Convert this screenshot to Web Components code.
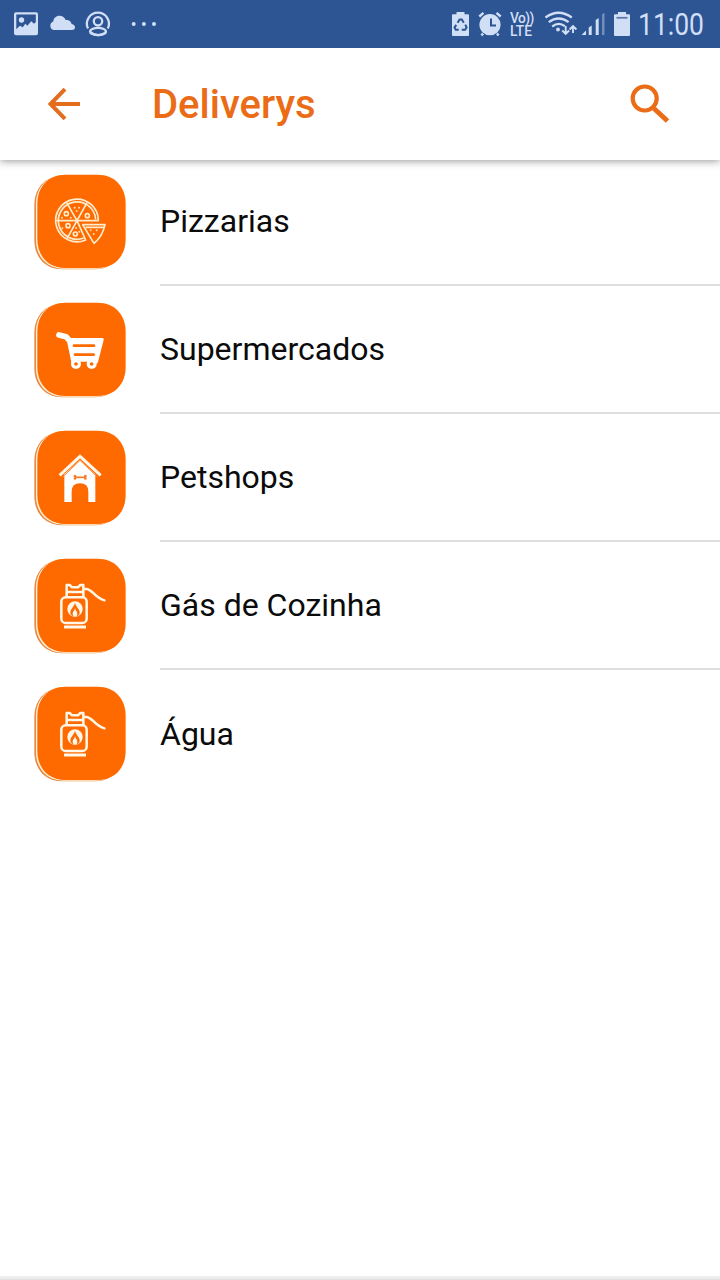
<!DOCTYPE html>
<html lang="pt-BR">
<head>
<meta charset="utf-8">
<title>Deliverys</title>
<style>
html,body{margin:0;padding:0;background:#fff}
body{width:720px;height:1280px;overflow:hidden;font-family:Roboto,"Liberation Sans",sans-serif}
</style>
</head>
<body>
<delivery-app></delivery-app>
<script>
const statusIcons = {
  picture: [12, 28, '<path fill-rule="evenodd" d="M16 12.3h20a2 2 0 0 1 2 2v18.900a2 2 0 0 1-2 2H16a2 2 0 0 1-2-2V14.300a2 2 0 0 1 2-2zM16.300 14.500v14.700l3.500-3.500 3 1.500 2.500-3.500 2 2 4-4.500 2.700 2.500 1.800-1.500v-7.700z"/><circle cx="21.500" cy="20" r="2.700"/>'],
  cloud: [48, 28, '<path d="M53.700 30a4.400 4.400 0 0 1-.5-8.400c.3-3.500 2.900-5.900 6.300-5.900 3 0 5.200 1.700 6.200 4.300 3.300-.5 5.500 1.300 5.900 3.900 4.600.5 4.500 6.100.3 6.100z"/>'],
  person: [85, 28, '<g fill="none" stroke="currentColor" stroke-width="2.300"><path d="M88 28.500a11 11 0 1 1 19.800 0M90.500 32a11 11 0 0 0 15.500 0"/><circle cx="98" cy="21.300" r="4.200"/><ellipse cx="98" cy="31.500" rx="8" ry="3.600"/></g>'],
  more: [130, 32, '<circle cx="133.700" cy="24" r="2"/><circle cx="143.900" cy="24" r="2"/><circle cx="154" cy="24" r="2"/>'],
  recycle: [450, 22, '<path d="M456.500 12h8v2.300h3.500q1 0 1 1V35q0 1-1 1h-15q-1 0-1-1V15.300q0-1 1-1h3.500z"/><g fill="none" stroke="#2d5593" stroke-width="2"><path d="M457.600 22.800l2-3.300h2.200l2 3.200M465.300 24.700l1.300 2.800-1.500 2.300h-3.400M458.700 29.800h-2.900l-1.300-2.200 1.700-2.700"/></g>'],
  alarm: [477, 26, '<circle cx="490" cy="24.700" r="10.600"/><path d="M491 18.500v7h5" fill="none" stroke="#2d5593" stroke-width="2"/><path d="M479.300 16.500l4.200-3.600M500.700 16.500l-4.200-3.600M483 33.500l-1.500 1.900M497 33.500l1.500 1.900" fill="none" stroke="currentColor" stroke-width="2.500"/>'],
  wifi: [543, 35, '<g fill="none" stroke="currentColor" stroke-width="2.300"><path d="M545.500 17.500q13-9.500 26.300 0M548.800 22.200q9.800-7.500 19.800 0M552.200 26.500q6.500-5 12.600-.300"/></g><circle cx="558" cy="29.500" r="1.900"/><g fill="none" stroke="currentColor" stroke-width="1.900"><path d="M565.700 26v7.500M562.300 30.500l3.400 3.500 3.400-3.500M573 33v-6.500M569.600 29.500l3.400-3.500 3.400 3.500"/></g>'],
  signal: [579, 28, '<path d="M581.500 35l4.500-4.500V35zM588.700 27.500l3-2V35h-3zM595.700 20l3-2v17h-3z"/><path opacity=".42" d="M602 14.500l2.500-2V35H602z"/>'],
  battery: [612, 20, '<path d="M618 12h8v2.200h3q1 0 1 1V35q0 1-1 1h-14q-1 0-1-1V15.200q0-1 1-1h3z"/><path d="M616.500 17.800h11" stroke="#5d79ac" stroke-width="1.800"/>']
};
const gas = '<g fill="none" stroke="#fff8e8" stroke-width="7.500" stroke-linejoin="round"><rect x="109" y="139" width="76" height="77" rx="13"/><path d="M125 138V102h9l7 7h18l7-7h9v36M125 123h50"/><path d="M178 114h7c18 2 24 26 53 34" stroke-linecap="round"/><path d="M117 228h66" stroke-linecap="butt" stroke-width="9"/></g><circle cx="150" cy="174" r="23" fill="#fff8e8"/><path d="M150 155c3 13 14 18 14 30 0 8-6 11-14 11s-14-4-14-11c0-12 11-17 14-30z" fill="#ff6a00"/><path d="M150 172c1 7 7 10 7 16s-3 9-7 9-7-3-7-9 6-9 7-16z" fill="#fff8e8"/>';
const glyphs = {
  pizza: '<g fill="none" stroke="#ffeccb" stroke-width="5" stroke-linejoin="round"><path d="M220 167A64 64 0 1 0 182 225L156 167z"/><path d="M212 163A56 56 0 1 0 176 219M156 167H94M156 167l-31-54M156 167l30-54M156 167l-30 54"/><path d="M173 179h67q-7 35-33 56zM182 187h54"/><circle cx="187" cy="152" r="6"/><circle cx="124" cy="146" r="6"/><circle cx="129" cy="182" r="6"/><circle cx="151" cy="207" r="6"/></g><g fill="#ffdfae"><circle cx="149" cy="128" r="3"/><circle cx="162" cy="128" r="3"/><circle cx="155" cy="138" r="3"/><circle cx="111" cy="158" r="3"/><circle cx="137" cy="158" r="3"/><circle cx="112" cy="190" r="3"/><circle cx="153" cy="189" r="3"/><circle cx="163" cy="200" r="3"/><circle cx="197" cy="196" r="3"/><circle cx="215" cy="196" r="3"/><circle cx="206" cy="207" r="3"/></g>',
  cart: '<path d="M102 120l21 5 8 9" fill="none" stroke="#fff" stroke-width="17" stroke-linecap="round" stroke-linejoin="round"/><path d="M124 129h108q5 0 4 6l-17 66q-1 5-6 5h-10l-14-6h-24l-12 6h-13z" fill="#fff"/><circle cx="153" cy="207" r="15" fill="#fff"/><circle cx="200" cy="207" r="15" fill="#fff"/><g fill="#ff6a00"><circle cx="153" cy="207" r="5.500"/><circle cx="200" cy="207" r="5.500"/></g><path d="M147 152h60M150 179h56" stroke="#ff6a00" stroke-width="8" stroke-linecap="round"/>',
  house: '<path d="M104 157l61-57 62 57" fill="none" stroke="#fff8ea" stroke-width="9"/><path d="M165 110l46 44v83h-21v-31q0-25-25-25t-25 25v31h-22v-83z" fill="#fff"/><path d="M113 162l52-50 52 50" fill="none" stroke="#ff8b38" stroke-width="3"/><path d="M151 163h29" stroke="#f47920" stroke-width="5"/><g fill="#f47920"><circle cx="150" cy="159.500" r="4"/><circle cx="150" cy="166.500" r="4"/><circle cx="181" cy="159.500" r="4"/><circle cx="181" cy="166.500" r="4"/></g>',
  gas
};

customElements.define('status-icon', class extends HTMLElement {
  connectedCallback() {
    const [x, w, art] = statusIcons[this.getAttribute('name')];
    this.attachShadow({mode: 'open'}).innerHTML = `<style>:host{display:block;flex:none;color:#d0def6}svg{display:block;overflow:visible}</style><svg width="${w}" height="48" viewBox="${x} 0 ${w} 48" fill="currentColor">${art}</svg>`;
  }
});

customElements.define('volte-badge', class extends HTMLElement {
  connectedCallback() {
    this.attachShadow({mode: 'open'}).innerHTML = `<style>
      :host{display:block;flex:none;width:28px;height:48px;padding:11.500px 0 0 2px;box-sizing:border-box;color:#d0def6;font:500 14.500px/13px Roboto,"Liberation Sans",sans-serif}
      p{margin:0;width:max-content;white-space:pre;transform:scaleX(.95);transform-origin:0 50%}
      p::first-line{letter-spacing:-.6px}
      </style><p>Vo))\nLTE</p>`;
  }
});

customElements.define('status-clock', class extends HTMLElement {
  connectedCallback() {
    this.attachShadow({mode: 'open'}).innerHTML = `<style>
      :host{display:block;flex:none;width:70px;height:48px;color:#d0def6;font:31px/48px Roboto,"Liberation Sans",sans-serif}
      span{display:block;width:max-content;white-space:nowrap;transform:scaleX(.855);transform-origin:0 50%;padding-top:.5px}
      </style><span><slot></slot></span>`;
  }
});

customElements.define('status-bar', class extends HTMLElement {
  connectedCallback() {
    this.attachShadow({mode: 'open'}).innerHTML = `<style>
      :host{display:flex;justify-content:space-between;height:48px;padding:0 12px;background:#2d5593;box-sizing:border-box}
      div{display:flex}.left{gap:8px}.left :nth-child(3){margin-left:1px}.left :nth-child(4){margin-left:9px}
      .right :nth-child(2){margin-left:5px}.right :nth-child(3){margin-left:5px}.right :nth-child(4){margin-left:7px}.right :nth-child(5){margin-left:1px}.right :nth-child(6){margin-left:5px}.right :nth-child(7){margin-left:6px}
      </style><div class="left">${['picture','cloud','person','more'].map(n => `<status-icon name="${n}"></status-icon>`).join('')}</div>
      <div class="right"><status-icon name="recycle"></status-icon><status-icon name="alarm"></status-icon><volte-badge></volte-badge>${['wifi','signal','battery'].map(n => `<status-icon name="${n}"></status-icon>`).join('')}<status-clock>11:00</status-clock></div>`;
  }
});

customElements.define('app-bar', class extends HTMLElement {
  connectedCallback() {
    this.attachShadow({mode: 'open'}).innerHTML = `<style>
      :host{display:flex;align-items:center;height:112px;padding:0 46px;box-sizing:border-box;background:#fff;color:#eb6c17;box-shadow:0 1px 8px rgba(0,0,0,.42);clip-path:inset(0 0 -12px 0);position:relative;z-index:1}
      h1{margin:2px 0 0 70px;flex:1;font-size:40px;line-height:48px;font-weight:500}
      svg{display:block}
      </style>
      <svg width="36" height="36" viewBox="0 0 36 36" fill="none" stroke="#e36c1f" stroke-width="4"><path d="M34 18H5M19 3.200L4.500 18 19 32.800"/></svg>
      <h1><slot></slot></h1>
      <svg width="46" height="46" viewBox="0 0 46 46" fill="none" stroke="currentColor"><circle cx="16.700" cy="17.500" r="12" stroke-width="4.200"/><path d="M26 27.500L39.500 40" stroke-width="5"/></svg>`;
  }
});

customElements.define('category-tile', class extends HTMLElement {
  connectedCallback() {
    const name = this.getAttribute('icon');
    const shape = 'M122 24H219C272 24 303 62 303 111V217C303 266 272 304 219 304H122C69 304 38 266 38 217V111C38 62 69 24 122 24Z';
    this.attachShadow({mode: 'open'}).innerHTML = `<style>:host{display:block;flex:none;width:110px;height:110px}svg{display:block}</style>
      <svg width="110" height="110" viewBox="0 0 330 330"><path d="${shape}" transform="translate(-10 3)" fill="#e78b45"/><path d="${shape}" transform="translate(-5 1)" fill="#fff3dc"/><path d="${shape}" transform="translate(-1 -1)" fill="#ff6a00"/><g${name === 'pizza' ? ' transform="translate(0 -6)"' : ''}>${glyphs[name]}</g></svg>`;
  }
});

customElements.define('category-row', class extends HTMLElement {
  connectedCallback() {
    this.attachShadow({mode: 'open'}).innerHTML = `<style>
      :host{display:flex;height:128px;padding-left:25px;box-sizing:border-box}
      category-tile{margin-top:9px}
      .label{flex:1;margin-left:25px;box-sizing:border-box;border-bottom:2px solid #dedede;display:flex;align-items:center;font-size:32px;line-height:40px;color:#0b0b0b}
      :host(:last-of-type) .label{border:0}
      </style><category-tile icon="${this.getAttribute('icon')}"></category-tile><div class="label"><slot></slot></div>`;
  }
});

customElements.define('delivery-app', class extends HTMLElement {
  connectedCallback() {
    this.attachShadow({mode: 'open'}).innerHTML = `<style>
      :host{display:flex;flex-direction:column;width:720px;height:1280px;background:#fff;overflow:hidden}
      status-bar,app-bar,footer{flex:none}
      main{flex:1;margin-top:-2px}
      footer{height:4px;background:linear-gradient(#f1f1f1,#eaeaea 75%,#d8d8d8)}
      </style>
      <status-bar></status-bar>
      <app-bar>Deliverys</app-bar>
      <main>
        <category-row icon="pizza">Pizzarias</category-row>
        <category-row icon="cart">Supermercados</category-row>
        <category-row icon="house">Petshops</category-row>
        <category-row icon="gas">Gás de Cozinha</category-row>
        <category-row icon="gas">Água</category-row>
      </main>
      <footer></footer>`;
  }
});
</script>
</body>
</html>
